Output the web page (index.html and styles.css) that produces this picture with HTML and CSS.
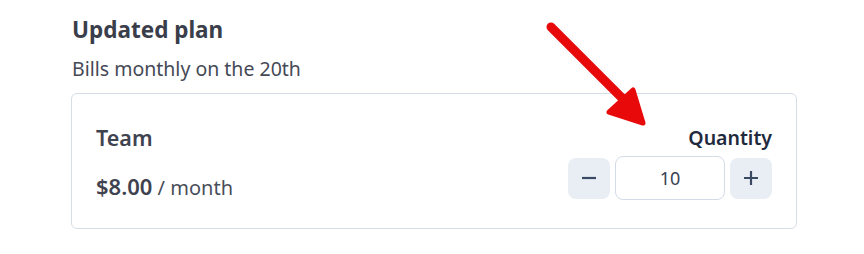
FILE: index.html
```html
<!DOCTYPE html>
<html>
<head>
  <meta charset="UTF-8">
  <title>Updated plan</title>
  <link rel="stylesheet" href="styles.css">
</head>
<body>
  <div class="plan">
    <h2 class="plan-title">Updated plan</h2>
    <p class="plan-sub">Bills monthly on the 20th</p>

    <div class="plan-card">
      <div class="plan-info">
        <div class="plan-name">Team</div>
        <div class="plan-price"><strong>$8.00</strong> / month</div>
      </div>
      <div class="qty">
        <div class="qty-label">Quantity</div>
        <div class="qty-controls">
          <button class="qty-btn" aria-label="Decrease">
            <svg width="16" height="16" viewBox="0 0 16 16"><path d="M1 8h14" stroke="currentColor" stroke-width="2.2"/></svg>
          </button>
          <input class="qty-input" type="text" value="10">
          <button class="qty-btn" aria-label="Increase">
            <svg width="16" height="16" viewBox="0 0 16 16"><path d="M1 8h14M8 1v14" stroke="currentColor" stroke-width="2.2"/></svg>
          </button>
        </div>
      </div>
    </div>
  </div>

  <!-- annotation arrow -->
  <svg class="arrow" width="864" height="254" viewBox="0 0 864 254">
    <line x1="551" y1="27" x2="636" y2="112" stroke="#e8090b" stroke-width="9" stroke-linecap="round"/>
    <polygon points="643,123 609,112 633,90" fill="#e8090b" stroke="#e8090b" stroke-width="5" stroke-linejoin="round"/>
  </svg>
</body>
</html>
```

FILE: styles.css
```css
body {
  margin: 0;
  font-family: "Noto Sans", "Open Sans", sans-serif;
  color: #3f4350;
  background: #fff;
}
.plan {
  padding: 14px 0 0 71px;
  width: 726px;
}
.plan-title {
  margin: 0 0 0 1px;
  font-size: 22.5px;
  font-weight: 700;
  color: #3a3e4a;
  line-height: 32px;
}
.plan-sub {
  margin: 8px 0 9px 1px;
  font-size: 19.5px;
  line-height: 30px;
  color: #454955;
}
.plan-card {
  border: 1px solid #d5dde6;
  border-radius: 6px;
  display: flex;
  justify-content: space-between;
  padding: 30px 24px 26px 24px;
}
.plan-name {
  font-size: 21.5px;
  font-weight: 600;
  color: #3f4350;
  line-height: 28px;
}
.plan-price {
  margin-top: 20px;
  font-size: 20px;
  color: #4a4e5a;
  line-height: 28px;
}
.plan-price strong {
  font-size: 22px;
  font-weight: 600;
  color: #3f4350;
}
.qty {
  display: flex;
  flex-direction: column;
  align-items: flex-end;
}
.qty-label {
  font-size: 19.5px;
  font-weight: 600;
  color: #1f2a3d;
  line-height: 28px;
}
.qty-controls {
  display: flex;
  align-items: center;
  gap: 5px;
  margin-top: 4px;
}
.qty-btn {
  width: 42px;
  height: 41px;
  border: none;
  border-radius: 8px;
  background: #e9eef4;
  color: #3b4a63;
  display: flex;
  align-items: center;
  justify-content: center;
  padding: 0;
}
.qty-input {
  width: 110px;
  height: 44px;
  box-sizing: border-box;
  border: 1px solid #d3dce6;
  border-radius: 8px;
  text-align: center;
  font-family: inherit;
  font-size: 18px;
  color: #3a4252;
  outline: none;
}
.arrow {
  position: absolute;
  left: 0;
  top: 0;
  pointer-events: none;
}
```
